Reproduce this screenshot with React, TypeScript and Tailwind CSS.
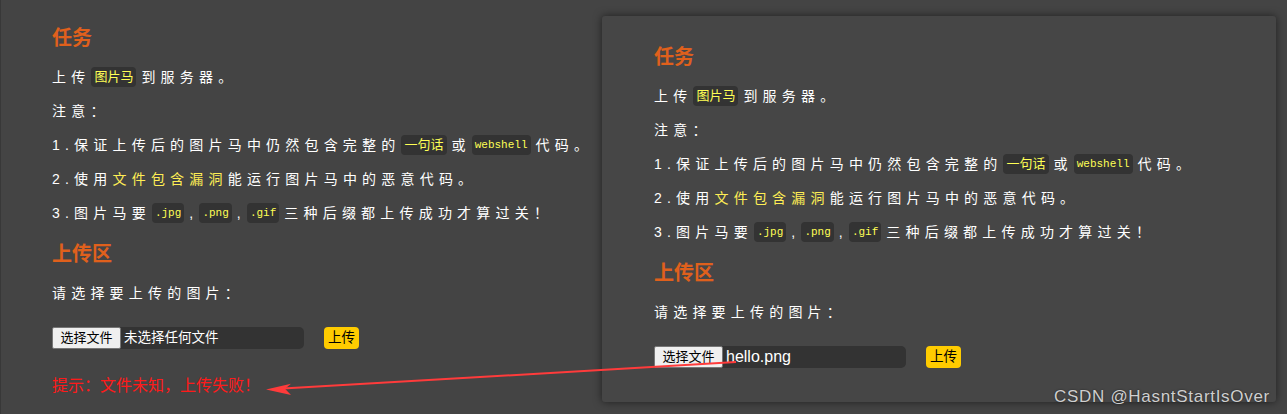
const sans = "font-['Liberation_Sans','Noto_Sans_CJK_SC',sans-serif]";

function Code({ children, mono }: { children: React.ReactNode; mono?: boolean }) {
  return (
    <code
      className={`ml-[1px] mr-[5px] inline-block rounded-[4px] bg-[#333333] px-[3px] py-[1px] leading-[18px] tracking-normal text-[#ffff55] ${
        mono ? "font-['Liberation_Mono','Noto_Sans_CJK_SC',monospace] text-[11px]" : `${sans} text-[13px]`
      }`}
    >
      {children}
    </code>
  );
}

function Line({ children }: { children: React.ReactNode }) {
  return <p className="flex h-[34px] items-center whitespace-pre text-[14px] tracking-[5.2px] text-white">{children}</p>;
}

function FileInput({ name, big }: { name: string; big?: boolean }) {
  return (
    <div className="flex items-center gap-[20px]">
      <div className="flex h-[22px] w-[252px] items-center rounded-[5px] bg-[#333333]">
        <span className="flex h-[22px] w-[69px] items-center justify-center rounded-[2px] border border-[#767676] bg-[#efefef] text-[13px] text-black">
          选择文件
        </span>
        <span className={`pl-[3px] text-white ${big ? "text-[16px]" : "text-[13.5px]"}`}>{name}</span>
      </div>
      <span className="flex h-[22px] w-[35px] items-center justify-center rounded-[4px] bg-[#ffcc00] text-[13.5px] text-black">
        上传
      </span>
    </div>
  );
}

function Panel({ file, big, error }: { file: string; big?: boolean; error?: boolean }) {
  return (
    <div className="flex flex-col">
      <h3 className="flex h-[30px] items-center text-[20px] font-bold text-[#e0601c]">任务</h3>
      <div className="mt-[7px]">
        <Line>
          上传<Code>图片马</Code>到服务器。
        </Line>
        <Line>注意：</Line>
        <Line>
          1.保证上传后的图片马中仍然包含完整的<Code>一句话</Code>或<Code mono>webshell</Code>代码。
        </Line>
        <Line>
          2.使用<span className="text-[#ffee55]">文件包含漏洞</span>能运行图片马中的恶意代码。
        </Line>
        <Line>
          3.图片马要<Code mono>.jpg</Code>,<Code mono>.png</Code>,<Code mono>.gif</Code>三种后缀都上传成功才算过关！
        </Line>
      </div>
      <h3 className="mt-[9px] flex h-[30px] items-center text-[20px] font-bold text-[#e0601c]">上传区</h3>
      <div className="mt-[7px]">
        <Line>请选择要上传的图片：</Line>
      </div>
      <div className="mt-[17px]">
        <FileInput name={file} big={big} />
      </div>
      {error && (
        <p className="mt-[27px] flex h-[20px] items-center text-[16px] text-[#ff1a1a]">提示：文件未知，上传失败！</p>
      )}
    </div>
  );
}

export default function App() {
  return (
    <div className={`relative h-[414px] w-[1287px] overflow-hidden border-l border-[#383838] bg-[#444444] ${sans}`}>
      <div className="flex items-start">
        <div className="w-[601px] pl-[51px] pt-[23px]">
          <Panel file="未选择任何文件" error />
        </div>
        <div className="mt-[16px] h-[386px] w-[674px] rounded-[3px] bg-[#464646] pl-[52px] pt-[26px] shadow-[0_0_8px_rgba(0,0,0,0.55)]">
          <Panel file="hello.png" big />
        </div>
      </div>

      <svg className="pointer-events-none absolute inset-0" width="1287" height="414" viewBox="0 0 1287 414">
        <line x1="735" y1="362" x2="282" y2="388.6" stroke="#ff3b3b" strokeWidth="2" />
        <polygon points="265,389.6 290,383.8 284,388.8 290,395" fill="#ff3b3b" />
      </svg>

      <span className="absolute left-[1053px] top-[388px] text-[17px] leading-none tracking-[0.7px] text-[#cfcfcf] [text-shadow:0_0_2px_rgba(0,0,0,0.6)]">
        CSDN @HasntStartIsOver
      </span>
    </div>
  );
}
